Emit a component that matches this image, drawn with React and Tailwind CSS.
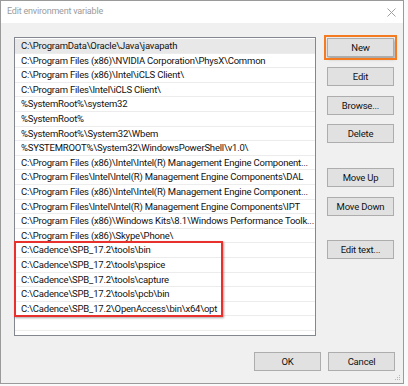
import React from "react";

const paths = [
  "C:\\ProgramData\\Oracle\\Java\\javapath",
  "C:\\Program Files (x86)\\NVIDIA Corporation\\PhysX\\Common",
  "C:\\Program Files (x86)\\Intel\\iCLS Client\\",
  "C:\\Program Files\\Intel\\iCLS Client\\",
  "%SystemRoot%\\system32",
  "%SystemRoot%",
  "%SystemRoot%\\System32\\Wbem",
  "%SYSTEMROOT%\\System32\\WindowsPowerShell\\v1.0\\",
  "C:\\Program Files (x86)\\Intel\\Intel(R) Management Engine Component...",
  "C:\\Program Files\\Intel\\Intel(R) Management Engine Components\\DAL",
  "C:\\Program Files (x86)\\Intel\\Intel(R) Management Engine Component...",
  "C:\\Program Files\\Intel\\Intel(R) Management Engine Components\\IPT",
  "C:\\Program Files (x86)\\Windows Kits\\8.1\\Windows Performance Toolk...",
  "C:\\Program Files (x86)\\Skype\\Phone\\",
];

const cadence = [
  "C:\\Cadence\\SPB_17.2\\tools\\bin",
  "C:\\Cadence\\SPB_17.2\\tools\\pspice",
  "C:\\Cadence\\SPB_17.2\\tools\\capture",
  "C:\\Cadence\\SPB_17.2\\tools\\pcb\\bin",
  "C:\\Cadence\\SPB_17.2\\OpenAccess\\bin\\x64\\opt",
];

const Row = ({ text, selected }) => (
  <div
    className={
      "h-[14.6px] border-b border-[#ececec] pl-[6px] leading-[14px] whitespace-nowrap overflow-hidden " +
      (selected ? "bg-[#e8e8e8]" : "")
    }
  >
    {text}
  </div>
);

const Btn = ({ label, className = "" }) => (
  <button
    className={
      "w-[67px] h-[19px] bg-[#e1e1e1] border border-[#adadad] text-[9.5px] tracking-[-0.2px] leading-[17px] whitespace-nowrap text-[#111] " +
      className
    }
  >
    {label}
  </button>
);

const App = () => {
  return (
    <div className="w-[408px] h-[386px] bg-[#fafafa] font-['Roboto',sans-serif] text-[9.5px] tracking-[-0.2px] text-[#111]">
      <div className="w-[404px] h-[384px] border border-[#9a9a9a] bg-[#f0f0f0] flex flex-col">
        {/* title bar */}
        <div className="h-[22px] bg-white flex items-center justify-between pl-[6px] pr-[7px]">
          <span className="text-[9px] text-[#9b9b9b]">Edit environment variable</span>
          <svg width="9" height="9" viewBox="0 0 9 9" className="stroke-[#a0a0a0]">
            <path d="M0.5 0.5L8.5 8.5M8.5 0.5L0.5 8.5" strokeWidth="1" />
          </svg>
        </div>

        <div className="flex pt-[14px] pl-[13px]">
          {/* list */}
          <div className="w-[302px] h-[299px] bg-white border border-[#828790] pt-[1px]">
            <Row text={paths[0]} selected />
            {paths.slice(1).map((p, i) => (
              <Row key={i} text={p} />
            ))}
            <div className="relative">
              {cadence.map((p, i) => (
                <Row key={i} text={p} />
              ))}
              <div className="absolute left-[-1px] top-[-2px] w-[209px] h-[76px] border-2 border-[#e8302c] shadow-[1px_1px_2px_rgba(0,0,0,0.35)]" />
            </div>
            <Row text="" />
          </div>

          {/* buttons */}
          <div className="flex flex-col ml-[11px] pt-[1px]">
            <div className="outline-[2.5px] outline outline-[#f47b20] outline-offset-[1px] shadow-[1px_2px_3px_rgba(0,0,0,0.35)] w-fit">
              <Btn label="New" />
            </div>
            <Btn label="Edit" className="mt-[10px]" />
            <Btn label="Browse..." className="mt-[10px]" />
            <Btn label="Delete" className="mt-[9px]" />
            <Btn label="Move Up" className="mt-[25px]" />
            <Btn label="Move Down" className="mt-[10px]" />
            <Btn label="Edit text..." className="mt-[24px]" />
          </div>
        </div>

        <div className="flex justify-end gap-[7px] pr-[8px] mt-[16px]">
          <Btn label="OK" className="w-[66px]" />
          <Btn label="Cancel" />
        </div>

        <div className="flex justify-end pr-[2px] mt-auto pb-[2px]">
          <svg width="6" height="6" viewBox="0 0 6 6" className="fill-[#b8b8b8]">
            <rect x="4" y="0" width="1" height="1" />
            <rect x="2" y="2" width="1" height="1" />
            <rect x="4" y="2" width="1" height="1" />
            <rect x="0" y="4" width="1" height="1" />
            <rect x="2" y="4" width="1" height="1" />
            <rect x="4" y="4" width="1" height="1" />
          </svg>
        </div>
      </div>
    </div>
  );
};

export default App;
